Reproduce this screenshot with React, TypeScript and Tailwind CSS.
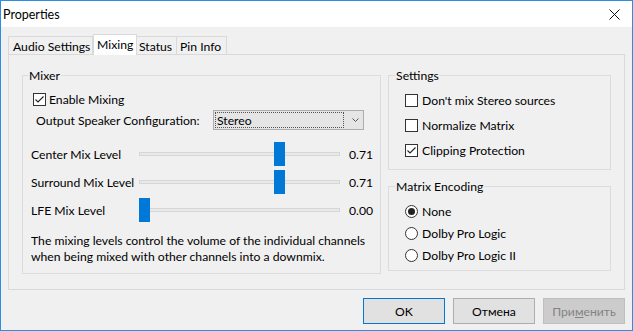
import React from 'react';

const font = { fontFamily: 'Lato, "Segoe UI", sans-serif' };

function CheckBox({ checked }: { checked?: boolean }) {
  return (
    <span className="w-[13px] h-[13px] border border-[#333333] bg-white flex items-center justify-center shrink-0">
      {checked && (
        <svg width="11" height="11" viewBox="0 0 11 11">
          <path d="M1.5 5.5 L4 8 L9.5 2.5" fill="none" stroke="#222222" strokeWidth="1.1" />
        </svg>
      )}
    </span>
  );
}

function Radio({ checked }: { checked?: boolean }) {
  return (
    <span className="w-[13px] h-[13px] rounded-full border border-[#333333] bg-white flex items-center justify-center shrink-0">
      {checked && <span className="w-[7px] h-[7px] rounded-full bg-[#222222]" />}
    </span>
  );
}

function Slider({ label, value }: { label: string; value: number }) {
  // thumb travel: 190px over the 201px track
  const left = Math.round(value * 190);
  return (
    <div className="flex items-center h-[24px]">
      <span className="w-[109px] pl-[1px]">{label}</span>
      <div className="relative w-[201px] h-[24px] flex items-center">
        <div className="w-full h-[4px] bg-[#e7eaea] border border-[#d6d6d6]" />
        <div className="absolute top-0 w-[11px] h-[24px] bg-[#0078d7]" style={{ left }} />
      </div>
      <span className="ml-[9px]">{value.toFixed(2)}</span>
    </div>
  );
}

function Button({ children, primary, disabled }: { children: React.ReactNode; primary?: boolean; disabled?: boolean }) {
  return (
    <div
      className={
        'w-[82px] h-[26px] flex items-center justify-center border ' +
        (primary
          ? 'border-[#0078d7] bg-[#e1e1e1] text-black'
          : disabled
          ? 'border-[#bfbfbf] bg-[#cccccc] text-[#838383]'
          : 'border-[#adadad] bg-[#e1e1e1] text-black')
      }
    >
      {children}
    </div>
  );
}

export default function App() {
  return (
    <div
      className="w-[633px] h-[331px] border border-[#2b8ee0] bg-[#f0f0f0] flex flex-col text-[12.2px] text-black leading-[15px] whitespace-nowrap"
      style={font}
    >
      {/* title bar */}
      <div className="h-[26px] bg-white flex items-center justify-between pl-[2px] pr-[12px] shrink-0">
        <span className="text-[12.5px]">Properties</span>
        <svg width="11" height="11" viewBox="0 0 11 11">
          <path d="M0.5 0.5 L10.5 10.5 M10.5 0.5 L0.5 10.5" stroke="#111111" strokeWidth="1" />
        </svg>
      </div>

      <div className="flex-1 px-[7px] pt-[7px] flex flex-col">
        {/* tabs */}
        <div className="flex items-end h-[21px]">
          <div className="h-[19px] pl-[4px] border border-b-0 border-[#d9d9d9] flex items-center w-[85px]">Audio Settings</div>
          <div className="relative z-10 h-[21px] bg-white border border-b-0 border-[#d9d9d9] flex items-center pl-[3px] w-[44px] pb-[2px]">
            Mixing
          </div>
          <div className="h-[19px] pl-[2px] border border-b-0 border-l-0 border-[#d9d9d9] flex items-center w-[40px]">Status</div>
          <div className="h-[19px] pl-[3px] border border-b-0 border-l-0 border-[#d9d9d9] flex items-center w-[50px]">Pin Info</div>
        </div>

        {/* panel */}
        <div className="-mt-[1px] h-[236px] w-[617px] border border-[#d9d9d9] flex gap-[7px] px-[13px] pt-[13px]">
          <fieldset className="w-[358px] h-[206px] border border-[#dcdcdc] px-[7px]">
            <legend className="ml-[-2px] px-[1px]">Mixer</legend>
            <div className="flex items-center gap-[3px] h-[16px] mt-[8px] ml-[3px]">
              <CheckBox checked />
              <span>Enable Mixing</span>
            </div>
            <div className="flex items-center h-[20px] mt-[3px]">
              <span className="w-[183px] pl-[6px]">Output Speaker Configuration:</span>
              <div className="w-[151px] h-[20px] border border-[#adadad] bg-[#e5e5e5] flex items-center">
                <div className="ml-[1px] w-[129px] h-[16px] border border-dotted border-[#555555] flex items-center pl-[1px]">
                  Stereo
                </div>
                <svg className="ml-[8px]" width="7" height="5" viewBox="0 0 7 5">
                  <path d="M0.5 0.5 L3.5 3.5 L6.5 0.5" fill="none" stroke="#555555" strokeWidth="1" />
                </svg>
              </div>
            </div>
            <div className="mt-[12px] flex flex-col gap-[4px]">
              <Slider label="Center Mix Level" value={0.71} />
              <Slider label="Surround Mix Level" value={0.71} />
              <Slider label="LFE Mix Level" value={0} />
            </div>
            <p className="mt-[11px] pl-[1px] leading-[16px]">
              The mixing levels control the volume of the individual channels
              <br />
              when being mixed with other channels into a downmix.
            </p>
          </fieldset>

          <div className="flex flex-col gap-[9px]">
            <fieldset className="w-[223px] h-[102px] border border-[#dcdcdc] pl-[16px]">
              <legend className="ml-[-10px] px-[1px]">Settings</legend>
              <div className="flex flex-col gap-[9px] mt-[9px]">
                <div className="flex items-center gap-[4px] h-[16px]">
                  <CheckBox />
                  <span>Don't mix Stereo sources</span>
                </div>
                <div className="flex items-center gap-[4px] h-[16px]">
                  <CheckBox />
                  <span>Normalize Matrix</span>
                </div>
                <div className="flex items-center gap-[4px] h-[16px]">
                  <CheckBox checked />
                  <span>Clipping Protection</span>
                </div>
              </div>
            </fieldset>
            <fieldset className="w-[223px] h-[92px] border border-[#dcdcdc] pl-[16px]">
              <legend className="ml-[-10px] px-[1px]">Matrix Encoding</legend>
              <div className="flex flex-col gap-[6px] mt-[9px]">
                <div className="flex items-center gap-[4px] h-[16px]">
                  <Radio checked />
                  <span>None</span>
                </div>
                <div className="flex items-center gap-[4px] h-[16px]">
                  <Radio />
                  <span>Dolby Pro Logic</span>
                </div>
                <div className="flex items-center gap-[4px] h-[16px]">
                  <Radio />
                  <span>Dolby Pro Logic II</span>
                </div>
              </div>
            </fieldset>
          </div>
        </div>

        {/* buttons */}
        <div className="flex justify-end gap-[8px] mt-[8px]">
          <Button primary>OK</Button>
          <Button>Отмена</Button>
          <Button disabled>
            <span>
              При<span className="underline">м</span>енить
            </span>
          </Button>
        </div>
      </div>
    </div>
  );
}
